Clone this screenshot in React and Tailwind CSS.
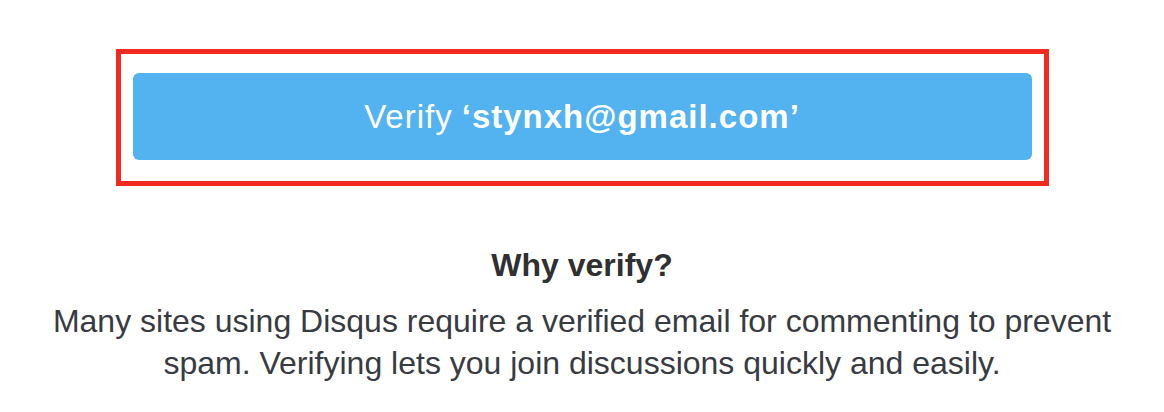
import React from "react";

function App() {
  const email = "stynxh@gmail.com";

  return (
    <div className="min-h-screen bg-white flex flex-col items-center pt-[49px] font-['Liberation_Sans',Arial,sans-serif]">
      <div className="w-[933px] border-[5px] border-[#f22b21] px-[12px] pt-[19px] pb-[21px]">
        <button className="w-full h-[87px] rounded-[6px] bg-[#52b3f0] text-white text-[33px] tracking-[1px] flex items-center justify-center">
          Verify <span className="font-bold ml-[9px]">‘{email}’</span>
        </button>
      </div>

      <div className="mt-[59px] w-[1100px] text-center text-[#383b3f]">
        <h2 className="text-[32px] font-bold text-[#303030] leading-[40px]">Why verify?</h2>
        <p className="mt-[15px] text-[32px] leading-[42px]">
          Many sites using Disqus require a verified email for commenting to prevent spam. Verifying lets you join discussions quickly and easily.
        </p>
      </div>
    </div>
  );
}

export default App;
